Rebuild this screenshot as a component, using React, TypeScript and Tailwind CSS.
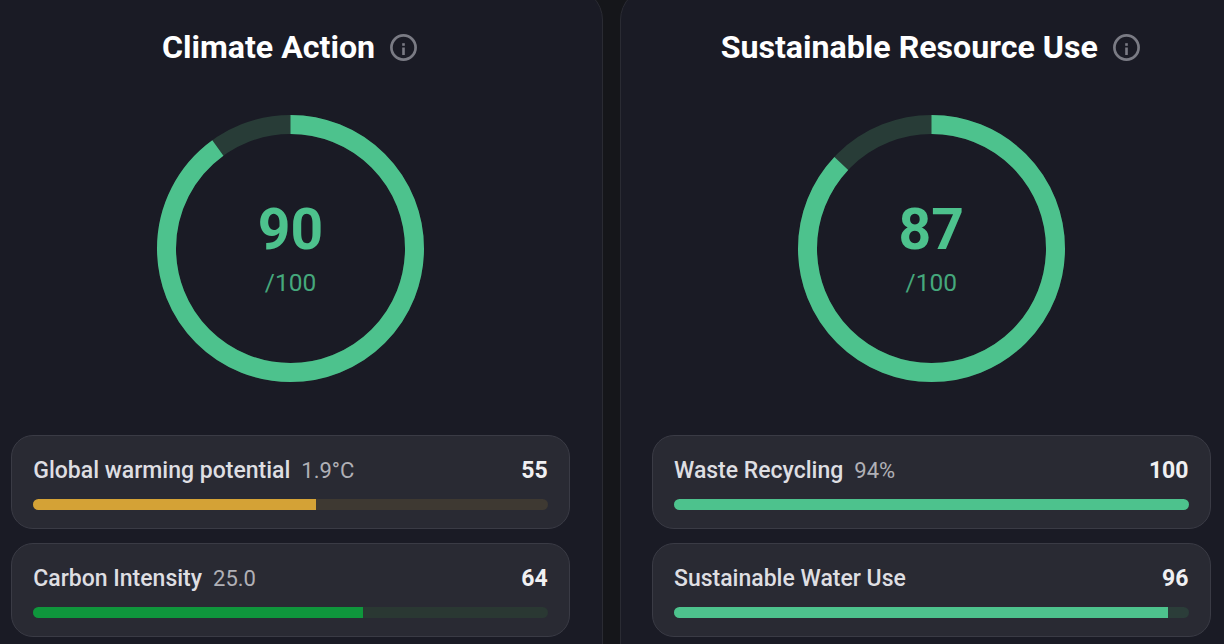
import * as React from "react";

const GREEN = "#4dc28d";

const cards = [
  {
    title: "Climate Action",
    score: 90,
    rows: [
      { label: "Global warming potential", note: "1.9°C", value: 55, fill: "bg-[#d4a236]", track: "bg-[#3e3932]" },
      { label: "Carbon Intensity", note: "25.0", value: 64, fill: "bg-[#0f963c]", track: "bg-[#2a3833]" },
    ],
  },
  {
    title: "Sustainable Resource Use",
    score: 87,
    rows: [
      { label: "Waste Recycling", note: "94%", value: 100, fill: "bg-[#4dc28d]", track: "bg-[#2b3d39]" },
      { label: "Sustainable Water Use", note: "", value: 96, fill: "bg-[#4dc28d]", track: "bg-[#2b3d39]" },
    ],
  },
];

function InfoIcon() {
  return (
    <svg width="27" height="27" viewBox="0 0 27 27" fill="none" className="shrink-0">
      <circle cx="13.5" cy="13.5" r="12.1" stroke="#7a7b84" strokeWidth="2.7" />
      <rect x="12.2" y="13.5" width="2.6" height="7.5" fill="#7a7b84" />
      <rect x="12.2" y="9.2" width="2.6" height="2.6" fill="#7a7b84" />
    </svg>
  );
}

function Ring({ score }: { score: number }) {
  const r = 124;
  const c = 2 * Math.PI * r;
  return (
    <div className="relative w-[267px] h-[267px]">
      <svg width="267" height="267" viewBox="0 0 267 267" className="-rotate-90">
        <circle cx="133.5" cy="133.5" r={r} fill="none" stroke="#283c37" strokeWidth="19" />
        <circle
          cx="133.5"
          cy="133.5"
          r={r}
          fill="none"
          stroke={GREEN}
          strokeWidth="19"
          strokeDasharray={`${(c * score) / 100} ${c}`}
        />
      </svg>
      <div className="absolute inset-0 flex flex-col items-center justify-center pb-[1.5px]">
        <span className="text-[57px] leading-[66px] font-bold text-[#4dc28d]">{score}</span>
        <span className="mt-[3.5px] text-[24.5px] leading-[33px] font-normal text-[#45a87c]">/100</span>
      </div>
    </div>
  );
}

export default function App() {
  return (
    <div className="h-[644px] w-[1224px] overflow-hidden bg-[#15161a] font-['Roboto',sans-serif]">
      <div className="flex gap-[16.75px] -ml-[21.25px] -mt-[13px] w-max">
        {cards.map((card) => (
          <section
            key={card.title}
            className="w-[624px] h-[720px] shrink-0 rounded-[33px] border border-[#2a2b33] bg-[#1a1b25] pl-[31px] pr-[31.5px] pt-[37.5px]"
          >
            <div className="flex items-center justify-center gap-[15px] h-[44px] pr-[2px]">
              <h2 className="text-[32.15px] leading-[44px] pb-[1.5px] font-bold text-white">{card.title}</h2>
              <InfoIcon />
            </div>
            <div className="flex justify-center mt-[45.5px]">
              <Ring score={card.score} />
            </div>
            <div className="mt-[53px] flex flex-col gap-[14px]">
              {card.rows.map((row) => (
                <div
                  key={row.label}
                  className="h-[94px] rounded-[22px] border border-[#3a3b45] bg-[#292a33] px-[21.5px] pt-[21px]"
                >
                  <div className="flex items-center justify-between h-[28px]">
                    <div className="flex items-baseline gap-[11px]">
                      <span className="text-[23px] font-medium text-[#dedee2]">{row.label}</span>
                      {row.note && <span className="text-[22px] text-[#b0b0b6]">{row.note}</span>}
                    </div>
                    <span className="text-[23px] font-bold text-[#f0f0f2]">{row.value}</span>
                  </div>
                  <div className={`mt-[14px] h-[11px] rounded-full overflow-hidden ${row.track}`}>
                    <div className={`h-full ${row.fill}`} style={{ width: `${row.value}%` }} />
                  </div>
                </div>
              ))}
            </div>
          </section>
        ))}
      </div>
    </div>
  );
}
